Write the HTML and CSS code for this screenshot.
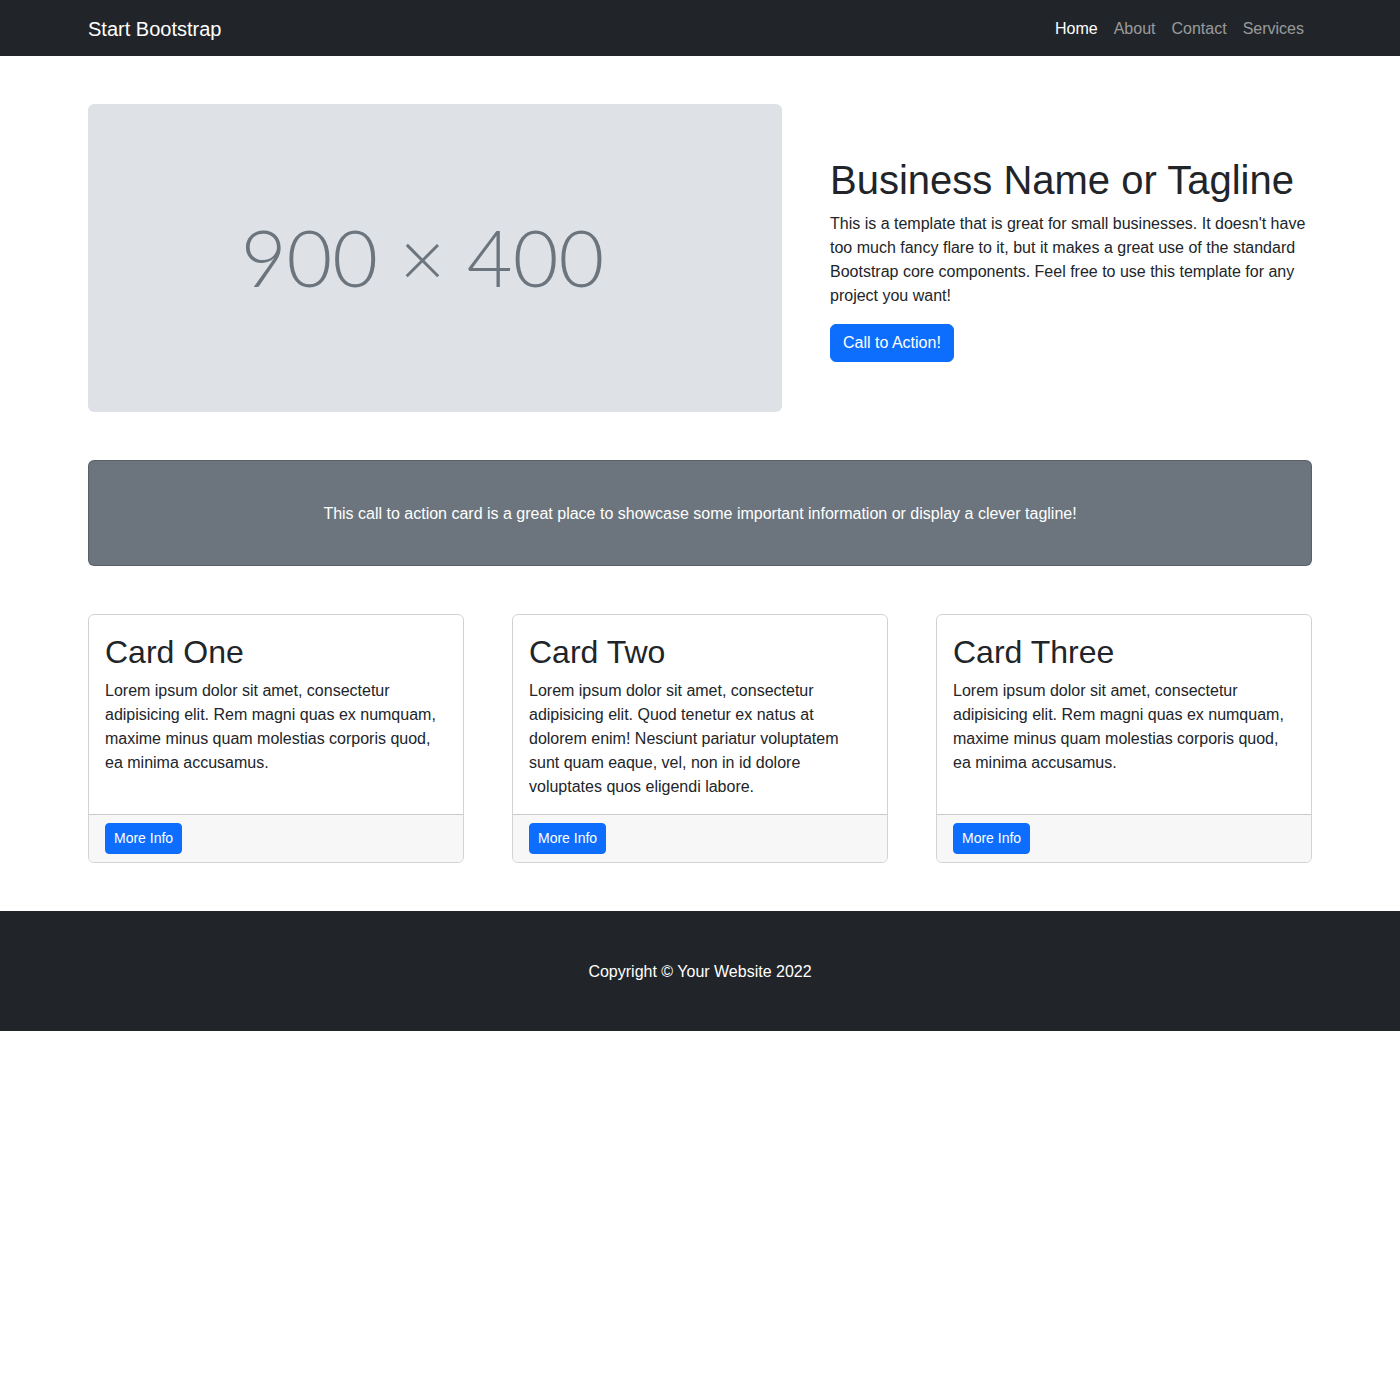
FILE: index.html
```html
<!DOCTYPE html>
<html lang="en">
<head>
<meta charset="utf-8">
<title>Small Business - Start Bootstrap Template</title>
<link rel="stylesheet" href="styles.css">
</head>
<body>
<nav class="navbar">
  <div class="container nav-inner">
    <a class="brand" href="#">Start Bootstrap</a>
    <ul class="nav-links">
      <li><a class="nav-link active" href="#">Home</a></li>
      <li><a class="nav-link" href="#">About</a></li>
      <li><a class="nav-link" href="#">Contact</a></li>
      <li><a class="nav-link" href="#">Services</a></li>
    </ul>
  </div>
</nav>
<main class="container">
  <section class="hero">
    <div class="hero-img"><span class="hero-img-text">900 × 400</span></div>
    <div class="hero-text">
      <h1 class="hero-title">Business Name or Tagline</h1>
      <p class="hero-lead">This is a template that is great for small businesses. It doesn't have too much fancy flare to it, but it makes a great use of the standard Bootstrap core components. Feel free to use this template for any project you want!</p>
      <a class="btn btn-primary" href="#">Call to Action!</a>
    </div>
  </section>
  <section class="cta-card">
    <p class="cta-text">This call to action card is a great place to showcase some important information or display a clever tagline!</p>
  </section>
  <section class="cards">
    <div class="card">
      <div class="card-body">
        <h2 class="card-title">Card One</h2>
        <p class="card-text">Lorem ipsum dolor sit amet, consectetur adipisicing elit. Rem magni quas ex numquam, maxime minus quam molestias corporis quod, ea minima accusamus.</p>
      </div>
      <div class="card-footer"><a class="btn btn-primary btn-sm" href="#">More Info</a></div>
    </div>
    <div class="card">
      <div class="card-body">
        <h2 class="card-title">Card Two</h2>
        <p class="card-text">Lorem ipsum dolor sit amet, consectetur adipisicing elit. Quod tenetur ex natus at dolorem enim! Nesciunt pariatur voluptatem sunt quam eaque, vel, non in id dolore voluptates quos eligendi labore.</p>
      </div>
      <div class="card-footer"><a class="btn btn-primary btn-sm" href="#">More Info</a></div>
    </div>
    <div class="card">
      <div class="card-body">
        <h2 class="card-title">Card Three</h2>
        <p class="card-text">Lorem ipsum dolor sit amet, consectetur adipisicing elit. Rem magni quas ex numquam, maxime minus quam molestias corporis quod, ea minima accusamus.</p>
      </div>
      <div class="card-footer"><a class="btn btn-primary btn-sm" href="#">More Info</a></div>
    </div>
  </section>
</main>
<footer class="footer">
  <div class="container"><p class="footer-text">Copyright © Your Website 2022</p></div>
</footer>
</body>
</html>
```
FILE: styles.css
```css
* { box-sizing: border-box; }
html, body { margin: 0; padding: 0; }
body {
  font-family: "Liberation Sans", Arial, sans-serif;
  font-size: 16px;
  line-height: 24px;
  color: #212529;
  background: #fff;
}
a { text-decoration: none; }
.container {
  width: 1320px;
  margin: 0 auto;
  padding: 0 48px;
}
.navbar {
  background: #212529;
  height: 56px;
}
.nav-inner {
  height: 56px;
  padding-top: 2px;
  display: flex;
  align-items: center;
  justify-content: space-between;
}
.brand {
  color: #fff;
  font-size: 20px;
  line-height: 30px;
}
.nav-links {
  list-style: none;
  margin: 0;
  padding: 0;
  display: flex;
}
.nav-link {
  display: block;
  padding: 8px;
  color: rgba(255,255,255,.55);
  font-size: 16px;
  line-height: 24px;
}
.nav-link.active { color: #fff; }

.hero {
  display: grid;
  grid-template-columns: 694px 1fr;
  column-gap: 48px;
  align-items: center;
  margin: 48px 0;
}
.hero-img {
  height: 308px;
  background: #dee2e6;
  border-radius: 6px;
  display: flex;
  align-items: center;
  justify-content: center;
  padding: 0 25px 4px 0;
}
.hero-img-text {
  font-family: "Lato", sans-serif;
  font-weight: 300;
  font-size: 79px;
  line-height: 1;
  color: #6c757d;
}
.hero-text { padding-top: 2px; }
.hero-title {
  font-size: 40px;
  line-height: 48px;
  font-weight: 400;
  margin: 0 0 8px;
}
.hero-lead { margin: 0 0 16px; }
.btn {
  display: inline-block;
  color: #fff;
  background: #0d6efd;
  border: 1px solid #0d6efd;
  border-radius: 6px;
  padding: 6px 12px;
  font-size: 16px;
  line-height: 24px;
}
.btn-sm {
  padding: 4px 8px;
  font-size: 14px;
  line-height: 21px;
  border-radius: 4px;
}
.cta-card {
  background: #6c757d;
  border: 1px solid rgba(0,0,0,.175);
  border-radius: 6px;
  padding: 41px 16px 39px;
  text-align: center;
  margin: 48px 0;
}
.cta-text { margin: 0; color: #fff; }
.cards {
  display: grid;
  grid-template-columns: repeat(3, 1fr);
  column-gap: 48px;
  margin-bottom: 48px;
}
.card {
  display: flex;
  flex-direction: column;
  border: 1px solid rgba(0,0,0,.175);
  border-radius: 6px;
  overflow: hidden;
}
.card-body {
  flex: 1;
  padding: 16px 16px 14.6px;
}
.card-title {
  font-size: 32px;
  line-height: 38.4px;
  font-weight: 400;
  margin: 2px 0 8px;
}
.card-text { margin: 0; }
.card-footer {
  background: #f7f7f7;
  border-top: 1px solid rgba(0,0,0,.175);
  padding: 8px 16px;
}
.footer {
  background: #212529;
  padding: 49px 0 47px;
}
.footer-text {
  margin: 0;
  text-align: center;
  color: #fff;
}
```
